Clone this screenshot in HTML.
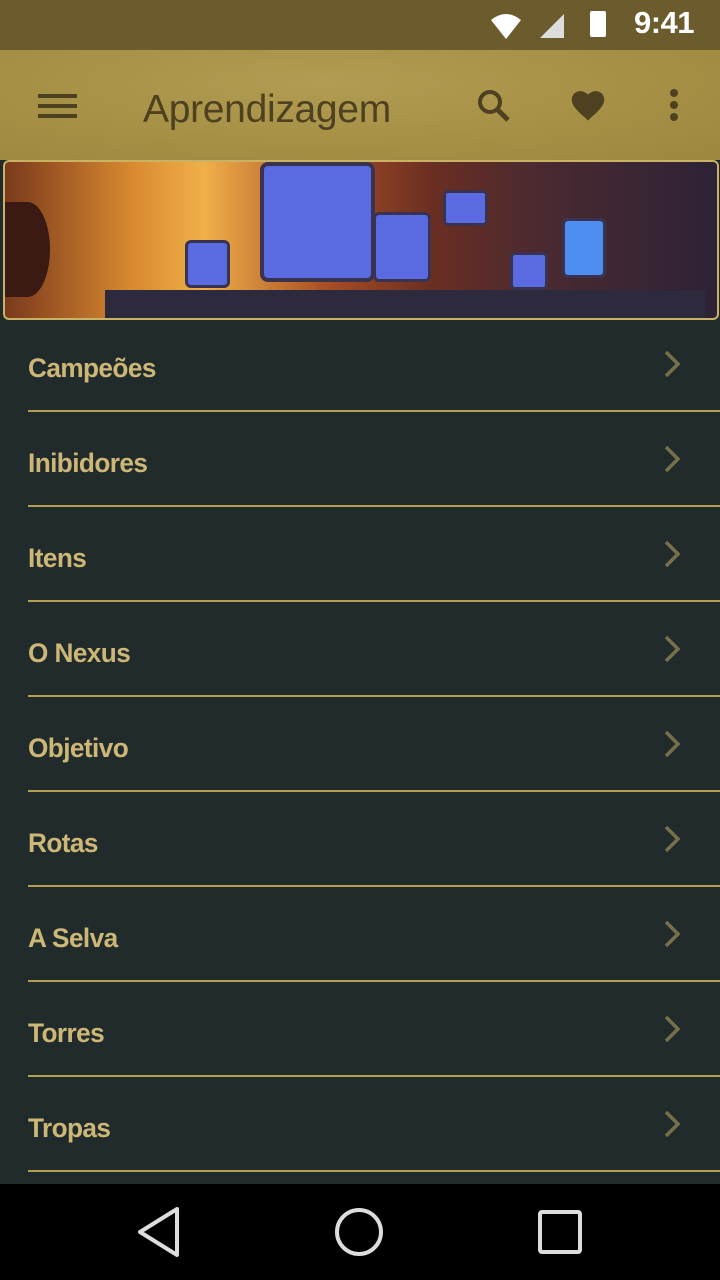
<!DOCTYPE html>
<html><head><meta charset="utf-8"><style>
*{margin:0;padding:0;box-sizing:border-box}
body{width:720px;height:1280px;background:#212b2c;font-family:"Liberation Sans",sans-serif;position:relative;overflow:hidden}
.status{position:absolute;top:0;left:0;width:720px;height:50px;background:#6b5b2d}
.time{position:absolute;right:26px;top:5px;color:#fff;font-size:31px;font-weight:bold;letter-spacing:-0.5px}
.appbar{position:absolute;top:50px;left:0;width:720px;height:110px;background:radial-gradient(ellipse at 45% 30%,#b09c52 0%,#a58f45 60%,#9c8740 100%)}
.title{position:absolute;left:143px;top:38px;font-size:39px;color:#4d4120;letter-spacing:-0.3px}
.banner{position:absolute;left:3px;top:160px;width:716px;height:160px;border:2px solid #c9b264;border-radius:6px;overflow:hidden;background:linear-gradient(90deg,#7a3a1c 0%,#d98a30 18%,#f0b04a 28%,#a84e24 45%,#6a2e22 60%,#4a2a30 75%,#2e2236 100%)}
.row{position:absolute;left:0;width:720px;height:95px}
.row span{position:absolute;left:28px;top:36px;font-size:27px;font-weight:bold;color:#cdb777;letter-spacing:-0.6px;transform:scaleX(0.97);transform-origin:left}
.row svg{position:absolute;left:662px;top:32px}
.row i{position:absolute;left:28px;right:0;bottom:0;height:2px;background:#b59f52}
.nav{position:absolute;left:0;top:1184px;width:720px;height:96px;background:#000}
</style></head><body>
<div class="status">
<svg style="position:absolute;left:490px;top:12px" width="32" height="28" viewBox="0 0 32 28"><path d="M1 8 Q16 -4 31 8 L16 27 Z" fill="#fff"/></svg>
<svg style="position:absolute;left:540px;top:14px" width="24" height="24"><path d="M0 24 L24 24 L24 0 Z" fill="#ddd"/></svg>
<div style="position:absolute;left:590px;top:11px;width:16px;height:26px;background:#fff;border-radius:2px"></div>
<div class="time">9:41</div>
</div>
<div class="appbar">
<svg style="position:absolute;left:38px;top:44px" width="39" height="24"><rect y="0" width="39" height="4" fill="#4d4120"/><rect y="10" width="39" height="4" fill="#4d4120"/><rect y="20" width="39" height="4" fill="#4d4120"/></svg>
<div class="title">Aprendizagem</div>
<svg style="position:absolute;left:476px;top:38px" width="36" height="36" viewBox="0 0 36 36"><circle cx="14" cy="14" r="10" fill="none" stroke="#4d4120" stroke-width="4"/><path d="M21 21 L32 32" stroke="#4d4120" stroke-width="5"/></svg>
<svg style="position:absolute;left:569px;top:38px" width="38" height="34" viewBox="0 0 24 22"><path d="M12 21 L10.5 19.6 C5 14.6 1.5 11.4 1.5 7.5 1.5 4.3 4 2 7 2 8.8 2 10.6 2.9 12 4.2 13.4 2.9 15.2 2 17 2 20 2 22.5 4.3 22.5 7.5 22.5 11.4 19 14.6 13.5 19.6Z" fill="#4d4120"/></svg>
<svg style="position:absolute;left:668px;top:38px" width="12" height="34"><circle cx="6" cy="5" r="4" fill="#4d4120"/><circle cx="6" cy="17" r="4" fill="#4d4120"/><circle cx="6" cy="29" r="4" fill="#4d4120"/></svg>
</div>
<div class="banner">
<div style="position:absolute;left:0;top:40px;width:45px;height:95px;border-radius:0 50% 50% 0;background:#3a1a12"></div>
<div style="position:absolute;left:255px;top:0;width:115px;height:120px;background:#5a6ae0;border:4px solid #3a3350;border-radius:8px"></div>
<div style="position:absolute;left:368px;top:50px;width:58px;height:70px;background:#5a6ae0;border:3px solid #3a3350;border-radius:6px"></div>
<div style="position:absolute;left:180px;top:78px;width:45px;height:48px;background:#5a6ae0;border:3px solid #3a3350;border-radius:6px"></div>
<div style="position:absolute;left:438px;top:28px;width:45px;height:36px;background:#5a6ae0;border:3px solid #3a3350;border-radius:5px"></div>
<div style="position:absolute;left:505px;top:90px;width:38px;height:38px;background:#5a6ae0;border:3px solid #3a3350;border-radius:5px"></div>
<div style="position:absolute;left:557px;top:56px;width:44px;height:60px;background:#4d8ef0;border:3px solid #3a3350;border-radius:6px"></div>
<div style="position:absolute;left:100px;top:128px;width:600px;height:32px;background:#2e2a3e"></div>
</div>
<div class="row" style="top:317px"><span>Campeões</span><svg width="20" height="30"><path d="M4 3 L16 15 L4 27" fill="none" stroke="#77704a" stroke-width="3.5"/></svg><i></i></div>
<div class="row" style="top:412px"><span>Inibidores</span><svg width="20" height="30"><path d="M4 3 L16 15 L4 27" fill="none" stroke="#77704a" stroke-width="3.5"/></svg><i></i></div>
<div class="row" style="top:507px"><span>Itens</span><svg width="20" height="30"><path d="M4 3 L16 15 L4 27" fill="none" stroke="#77704a" stroke-width="3.5"/></svg><i></i></div>
<div class="row" style="top:602px"><span>O Nexus</span><svg width="20" height="30"><path d="M4 3 L16 15 L4 27" fill="none" stroke="#77704a" stroke-width="3.5"/></svg><i></i></div>
<div class="row" style="top:697px"><span>Objetivo</span><svg width="20" height="30"><path d="M4 3 L16 15 L4 27" fill="none" stroke="#77704a" stroke-width="3.5"/></svg><i></i></div>
<div class="row" style="top:792px"><span>Rotas</span><svg width="20" height="30"><path d="M4 3 L16 15 L4 27" fill="none" stroke="#77704a" stroke-width="3.5"/></svg><i></i></div>
<div class="row" style="top:887px"><span>A Selva</span><svg width="20" height="30"><path d="M4 3 L16 15 L4 27" fill="none" stroke="#77704a" stroke-width="3.5"/></svg><i></i></div>
<div class="row" style="top:982px"><span>Torres</span><svg width="20" height="30"><path d="M4 3 L16 15 L4 27" fill="none" stroke="#77704a" stroke-width="3.5"/></svg><i></i></div>
<div class="row" style="top:1077px"><span>Tropas</span><svg width="20" height="30"><path d="M4 3 L16 15 L4 27" fill="none" stroke="#77704a" stroke-width="3.5"/></svg><i></i></div>
<div class="nav">
<svg style="position:absolute;left:135px;top:22px" width="48" height="52"><path d="M42 3 L5 26 L42 49 Z" fill="none" stroke="#ddd" stroke-width="4" stroke-linejoin="round"/></svg>
<svg style="position:absolute;left:333px;top:22px" width="52" height="52"><circle cx="26" cy="26" r="22" fill="none" stroke="#ddd" stroke-width="4"/></svg>
<svg style="position:absolute;left:537px;top:25px" width="46" height="46"><rect x="3" y="3" width="40" height="40" rx="2" fill="none" stroke="#ddd" stroke-width="4"/></svg>
</div>
</body></html>
